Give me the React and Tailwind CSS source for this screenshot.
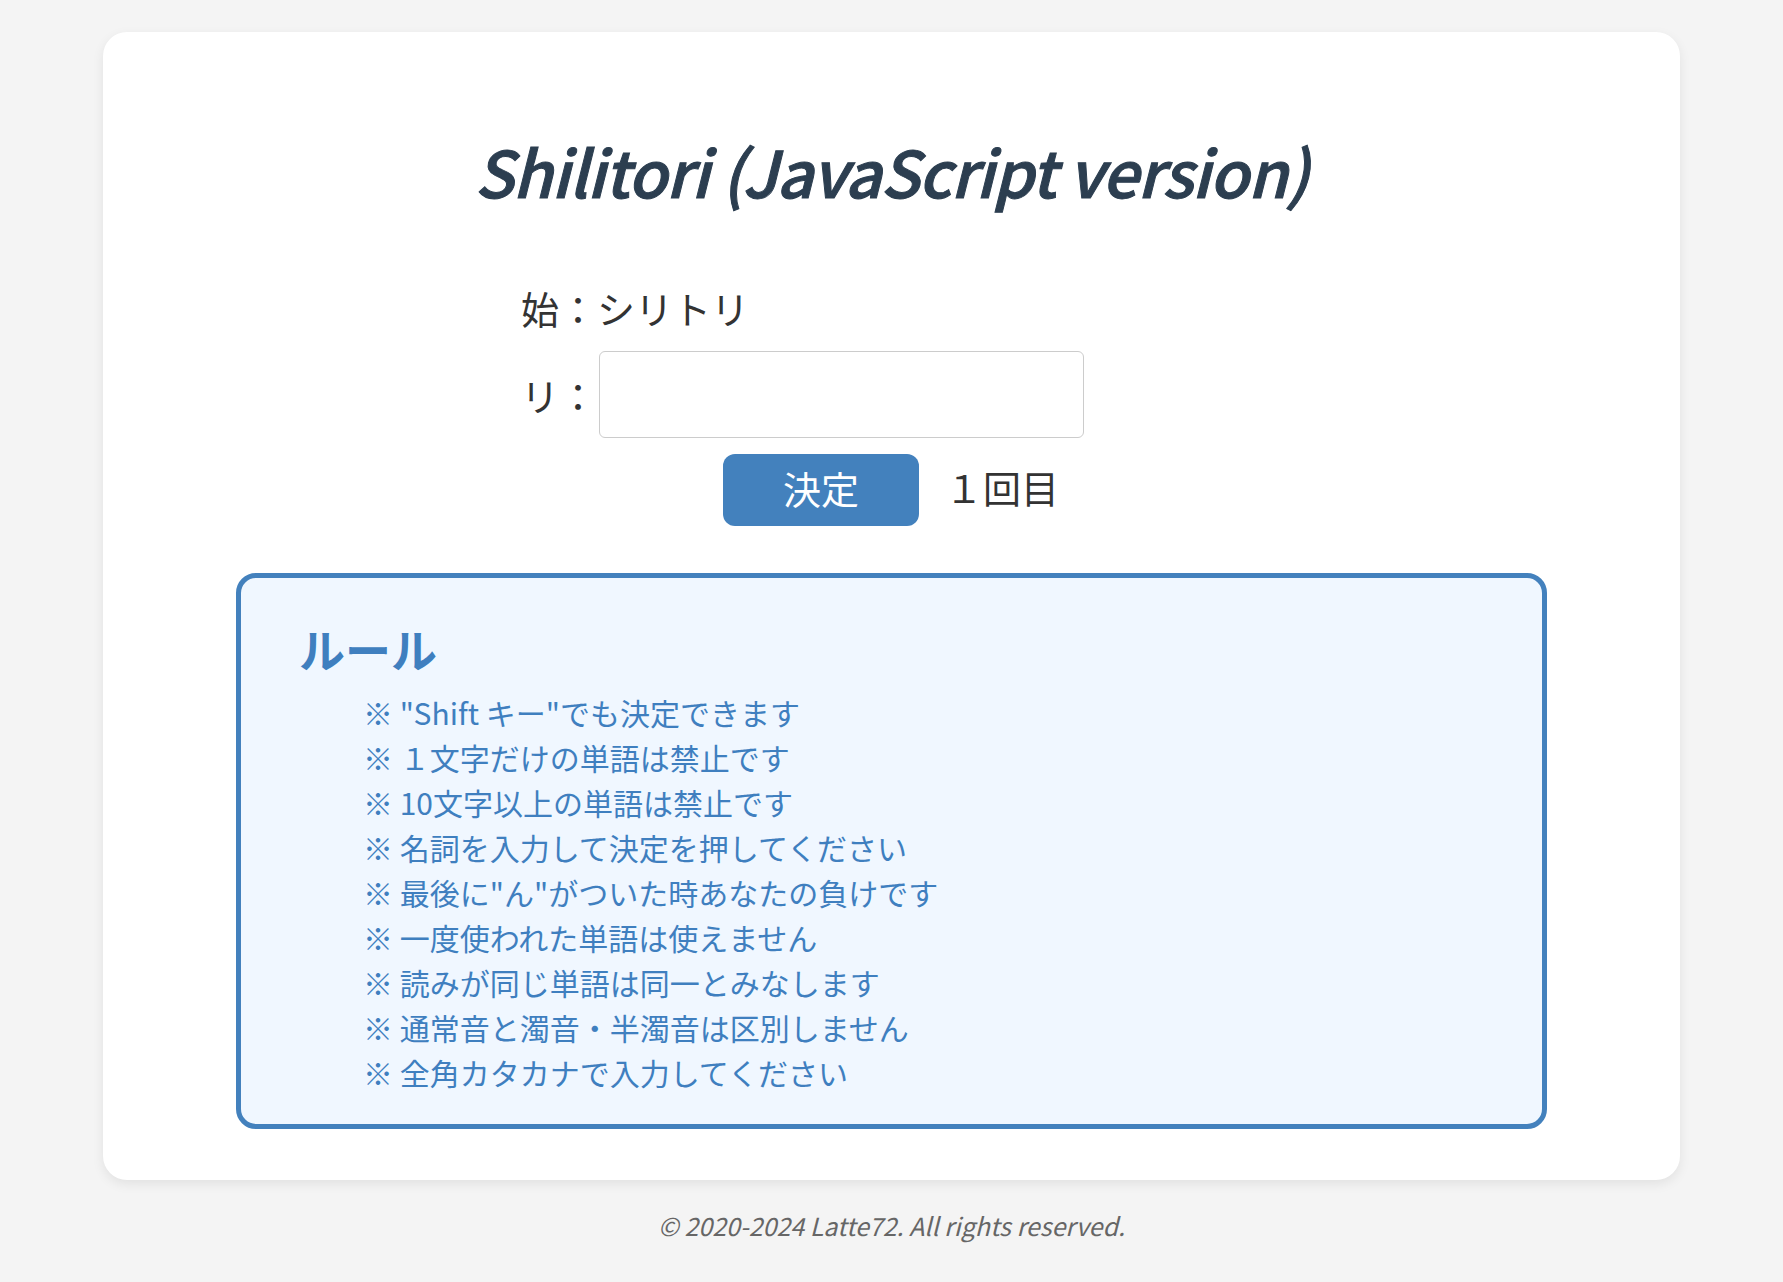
export default function App() {
  const rules = [
    '※ "Shift キー"でも決定できます',
    '※ １文字だけの単語は禁止です',
    '※ 10文字以上の単語は禁止です',
    '※ 名詞を入力して決定を押してください',
    '※ 最後に"ん"がついた時あなたの負けです',
    '※ 一度使われた単語は使えません',
    '※ 読みが同じ単語は同一とみなします',
    '※ 通常音と濁音・半濁音は区別しません',
    '※ 全角カタカナで入力してください',
  ];
  return (
    <div className="min-h-[1282px] bg-[#f4f4f4] pt-[32px] font-['Noto_Sans_CJK_JP',sans-serif]">
      <div className="mx-auto w-[1577px] rounded-[24px] bg-white pt-[88px] pb-[51px] shadow-[0_4px_12px_rgba(0,0,0,0.08)]">
        <h1 className="flex h-[100px] items-center justify-center text-[64px] font-medium italic tracking-[-1px] text-[#2c3e50] [-webkit-text-stroke:1px_#2c3e50]">
          Shilitori (JavaScript version)
        </h1>
        <div className="ml-[418px] mt-[66px] text-[38px] leading-[44px] text-[#333]">
          <div>始：シリトリ</div>
          <div className="mt-[21px] flex items-center">
            <span className="w-[78px]">リ：</span>
            <input
              type="text"
              className="h-[87px] w-[485px] rounded-[6px] border border-[#cccccc] bg-white px-3 text-[32px] outline-none"
            />
          </div>
          <div className="mt-[16px] flex items-center pl-[202px]">
            <button className="flex h-[72px] w-[196px] items-center justify-center rounded-[12px] bg-[#4381bd] pb-[4px] text-[38px] text-white">
              決定
            </button>
            <span className="ml-[26px] -translate-y-[3px]">１回目</span>
          </div>
        </div>
        <div className="mx-[133px] mt-[47px] h-[556px] rounded-[20px] border-[5px] border-[#4381bd] bg-[#f0f7ff] pl-[58px] pt-[41px] text-[#3f7fbf]">
          <h2 className="text-[46px] font-bold leading-[58px]">ルール</h2>
          <ul className="mt-[13px] pl-[64px] text-[30px] leading-[45px]">
            {rules.map((r) => (
              <li key={r}>{r}</li>
            ))}
          </ul>
        </div>
      </div>
      <p className="mt-[25px] text-center text-[25px] italic leading-[40px] text-[#666]">
        © 2020-2024 Latte72. All rights reserved.
      </p>
    </div>
  );
}
